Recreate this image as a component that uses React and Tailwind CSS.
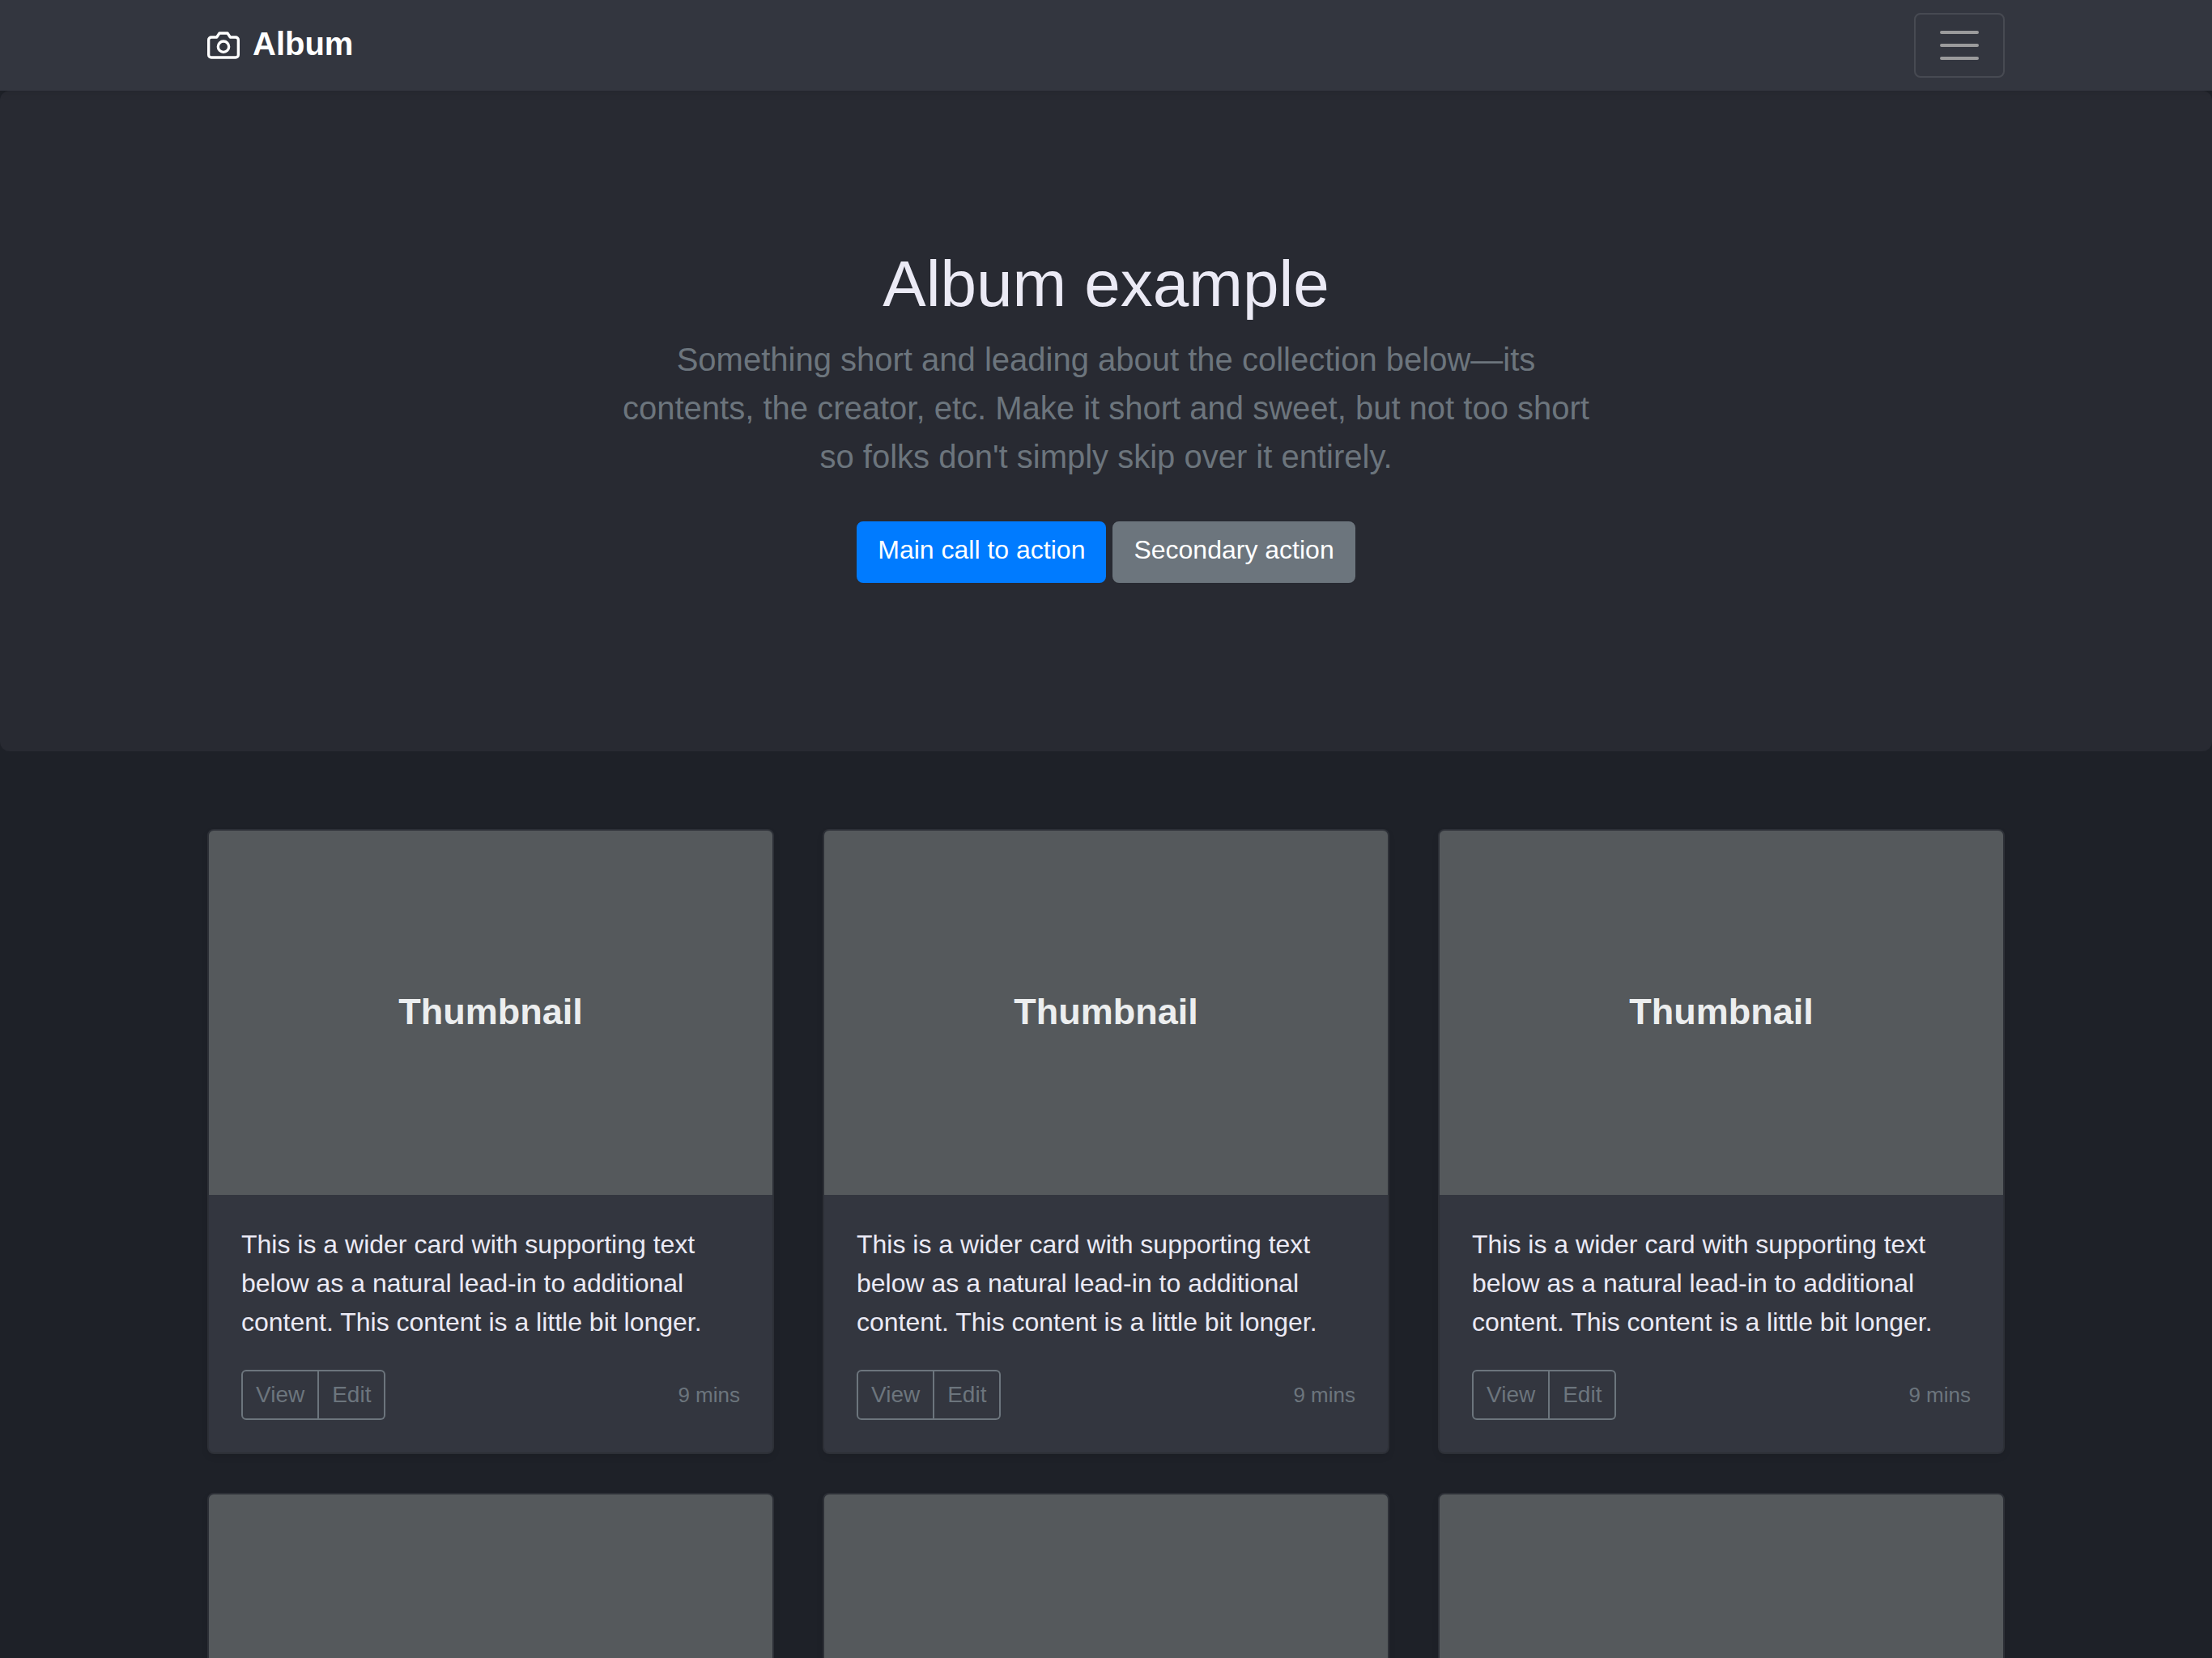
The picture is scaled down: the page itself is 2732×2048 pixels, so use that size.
const CARDS = [1, 2, 3, 4, 5, 6];

function CameraIcon() {
  return (
    <svg
      className="size-10"
      viewBox="0 0 24 24"
      fill="none"
      stroke="currentColor"
      strokeWidth="2"
      strokeLinecap="round"
      strokeLinejoin="round"
      aria-hidden="true"
    >
      <path d="M23 19a2 2 0 0 1-2 2H3a2 2 0 0 1-2-2V8a2 2 0 0 1 2-2h4l2-3h6l2 3h4a2 2 0 0 1 2 2z" />
      <circle cx="12" cy="13" r="4" />
    </svg>
  );
}

function Navbar() {
  return (
    <header className="relative bg-[#33363f] shadow-[0_4px_8px_rgba(0,0,0,0.075)]">
      <div className="mx-auto flex max-w-[2280px] items-center justify-between px-[30px] py-4">
        <a href="#" className="flex items-center gap-4 text-[40px] leading-[60px] font-bold text-white">
          <CameraIcon />
          <span className="pb-1">Album</span>
        </a>
        <button
          type="button"
          aria-label="Toggle navigation"
          className="rounded-lg border-2 border-white/10 px-6 py-2"
        >
          <svg
            className="block size-[60px] text-[#9b9b9c]"
            viewBox="0 0 30 30"
            stroke="currentColor"
            strokeWidth="2"
            strokeLinecap="round"
            aria-hidden="true"
          >
            <path d="M4 7h22M4 15h22M4 23h22" />
          </svg>
        </button>
      </div>
    </header>
  );
}

function Hero() {
  return (
    <section className="rounded-xl bg-[#282a32] pt-[191px] pb-48 text-center">
      <div className="mx-auto max-w-[1280px] px-[30px]">
        <h1 className="mb-[15px] text-[80px] leading-[96px] text-[#ebeaf5]">Album example</h1>
        <p className="mb-[34px] text-[40px] leading-[60px] text-[#6c757d]">
          Something short and leading about the collection below—its contents, the creator, etc. Make it short and
          sweet, but not too short so folks don't simply skip over it entirely.
        </p>
        <div className="flex justify-center gap-2 py-4 text-[32px] leading-[48px] text-white">
          <a href="#" className="rounded-lg border-2 border-[#007bff] bg-[#007bff] px-6 pt-[9px] pb-[15px]">
            Main call to action
          </a>
          <a href="#" className="rounded-lg border-2 border-[#6c757d] bg-[#6c757d] px-6 pt-[9px] pb-[15px]">
            Secondary action
          </a>
        </div>
      </div>
    </section>
  );
}

function Card() {
  return (
    <article className="rounded-lg border-2 border-[#2d3037] bg-[#33363f] shadow-[0_4px_8px_rgba(0,0,0,0.075)]">
      <div className="flex h-[450px] items-center justify-center rounded-t-md bg-[#55595c] pb-0.5 text-[45px] font-bold text-[#eceeef]">
        Thumbnail
      </div>
      <div className="px-10 pt-[37px] pb-10">
        <p className="mb-[35px] text-[32px] leading-[48px] text-[#ebeaf5]">
          This is a wider card with supporting text below as a natural lead-in to additional content. This content is a
          little bit longer.
        </p>
        <div className="flex items-center justify-between text-[#6c757d]">
          <div className="flex text-[28px] leading-[42px]">
            <button type="button" className="rounded-l-md border-2 border-[#6c757d] px-4 py-2">
              View
            </button>
            <button type="button" className="rounded-r-md border-2 border-l-0 border-[#6c757d] px-4 py-2">
              Edit
            </button>
          </div>
          <small className="text-[26px] leading-[38px]">9 mins</small>
        </div>
      </div>
    </article>
  );
}

export default function App() {
  return (
    <div className="min-h-screen bg-[#1e2128] font-['Liberation_Sans',Arial,sans-serif]">
      <Navbar />
      <main>
        <Hero />
        <section className="mx-auto grid max-w-[2280px] grid-cols-3 gap-x-[60px] gap-y-12 px-[30px] py-24">
          {CARDS.map((id) => (
            <Card key={id} />
          ))}
        </section>
      </main>
    </div>
  );
}
